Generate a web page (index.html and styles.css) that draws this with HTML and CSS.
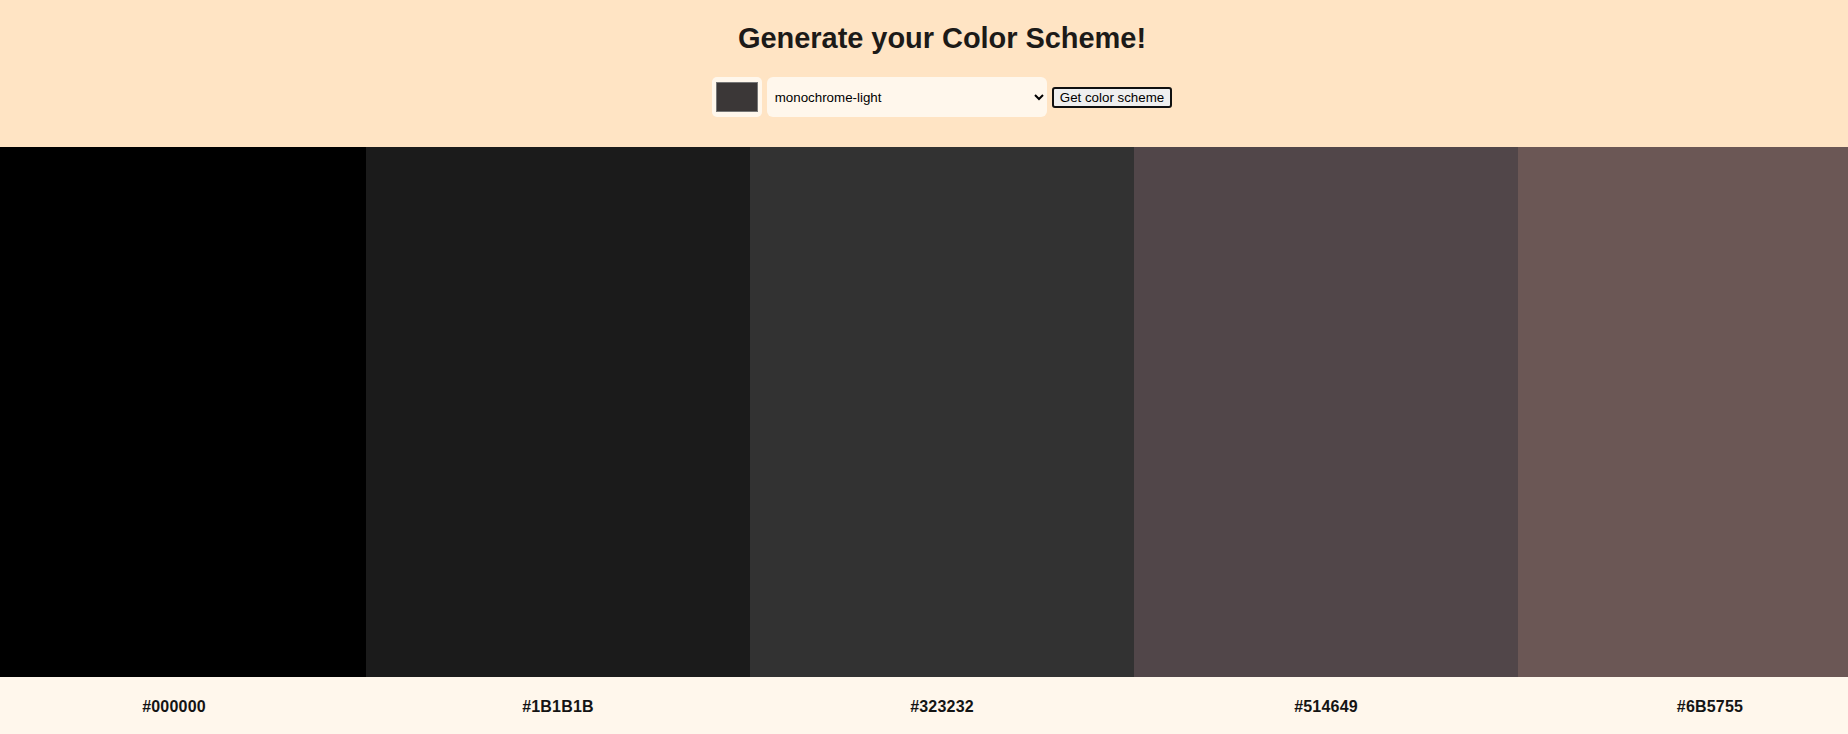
FILE: index.html
```html
<!DOCTYPE html>
<html lang="en">
<head>
<meta charset="utf-8">
<title>Color Scheme Generator</title>
<link rel="stylesheet" href="styles.css">
</head>
<body>
<div class="page">
  <header class="header">
    <h1 class="title">Generate your Color Scheme!</h1>
    <form class="controls">
      <input class="seed" type="color" value="#3b3737">
      <select class="mode">
        <option>monochrome-light</option>
        <option>monochrome</option>
        <option>monochrome-dark</option>
        <option>analogic</option>
        <option>complement</option>
      </select>
      <button class="btn" type="button">Get color scheme</button>
    </form>
  </header>
  <main class="colors">
    <div class="color" style="background:#000000"></div>
    <div class="color" style="background:#1B1B1B"></div>
    <div class="color" style="background:#323232"></div>
    <div class="color" style="background:#514649"></div>
    <div class="color" style="background:#6B5755"></div>
  </main>
  <footer class="labels">
    <p class="label">#000000</p>
    <p class="label">#1B1B1B</p>
    <p class="label">#323232</p>
    <p class="label">#514649</p>
    <p class="label">#6B5755</p>
  </footer>
</div>
</body>
</html>
```

FILE: styles.css
```css
html, body {
  margin: 0;
  padding: 0;
  overflow: hidden;
}

body {
  font-family: "Liberation Sans", Arial, sans-serif;
  background: #fff7ec;
}

.page {
  width: 1884px;
}

.header {
  background: #ffe4c4;
  padding: 21px 0 30px;
  display: flex;
  flex-direction: column;
  align-items: center;
  gap: 22px;
}

.title {
  margin: 0;
  font-size: 29px;
  line-height: 34px;
  font-weight: 700;
  color: #1c1a18;
  letter-spacing: -0.05px;
}

.controls {
  display: flex;
  align-items: center;
  gap: 5px;
  height: 40px;
}

.seed {
  -webkit-appearance: none;
  appearance: none;
  width: 50px;
  height: 40px;
  margin: 0;
  padding: 5px 4px;
  border: none;
  border-radius: 5px;
  background: #fff7ec;
  box-sizing: border-box;
  cursor: pointer;
}

.seed::-webkit-color-swatch-wrapper {
  padding: 0;
}

.seed::-webkit-color-swatch {
  border: 1px solid #767676;
  border-radius: 0;
}

.mode {
  width: 280px;
  height: 40px;
  margin: 0;
  padding: 0 4px;
  border: none;
  border-radius: 6px;
  background: #fff7ec;
  color: #000;
  font-family: "Liberation Sans", Arial, sans-serif;
  font-size: 13.33px;
  box-sizing: border-box;
}

.btn {
  height: 21px;
  margin: 0;
  padding: 0 6px;
  border: 2px solid #101010;
  border-radius: 3px;
  background: #efefef;
  color: #000;
  font-family: "Liberation Sans", Arial, sans-serif;
  font-size: 13.33px;
  line-height: 17px;
  box-sizing: border-box;
}

.colors,
.labels {
  display: flex;
  justify-content: center;
}

.colors {
  height: 530px;
}

.color {
  flex: 0 0 384px;
}

.labels {
  height: 57px;
  background: #fff7ec;
}

.label {
  flex: 0 0 384px;
  margin: 0;
  padding-top: 20px;
  text-align: center;
  font-size: 16px;
  line-height: 20px;
  font-weight: 700;
  letter-spacing: 0.2px;
  color: #141414;
}
```
